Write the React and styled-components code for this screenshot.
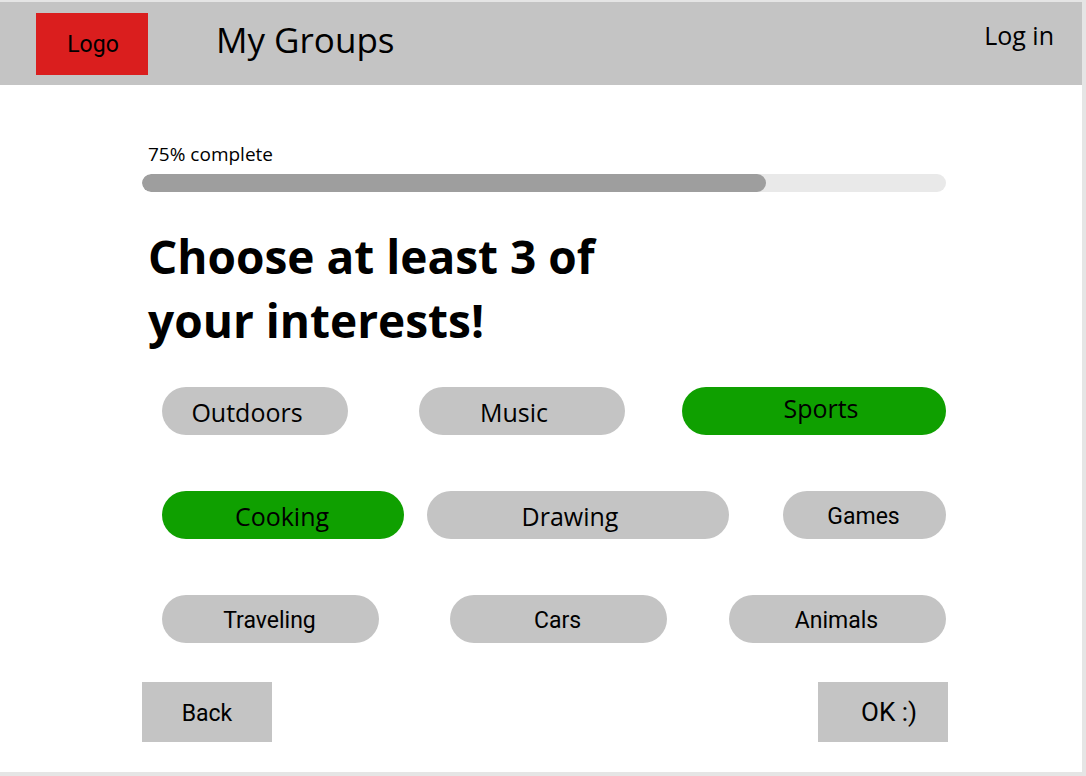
import React, { useState } from "react";
import styled, { createGlobalStyle, css } from "styled-components";

const GlobalStyle = createGlobalStyle`
  *, *::before, *::after { box-sizing: border-box; }
  body {
    margin: 0;
    background: #e5e5e5;
    color: #000;
    font-family: "Open Sans", "Noto Sans", sans-serif;
  }
`;

const Page = styled.div`
  display: flex;
  flex-direction: column;
  min-height: calc(100vh - 6px);
  margin: 2px 4px 4px 0;
  background: #fff;
`;

const Header = styled.header`
  display: flex;
  align-items: flex-start;
  padding: 11px 28px 10px 36px;
  background: #c4c4c4;
`;

const Logo = styled.a`
  display: flex;
  align-items: center;
  justify-content: center;
  width: 112px;
  height: 62px;
  padding-left: 2px;
  background: #da1e1e;
  color: #000;
  font-family: Roboto, sans-serif;
  font-size: 23px;
  text-decoration: none;
`;

const SiteTitle = styled.div`
  flex: 1;
  margin-left: 68px;
  font-size: 35px;
  line-height: 54px;
`;

const LoginLink = styled.a`
  color: #000;
  font-size: 25px;
  line-height: 44px;
  text-decoration: none;
`;

const Main = styled.main`
  padding: 57px 136px 0 142px;
`;

const ProgressLabel = styled.label`
  display: block;
  padding-left: 6px;
  font-size: 19px;
  line-height: 24px;
`;

const Progress = styled.progress`
  display: block;
  appearance: none;
  width: 100%;
  height: 18px;
  margin-top: 8px;
  border: 0;
  border-radius: 9px;
  background: #e9e9e9;
  overflow: hidden;

  &::-webkit-progress-bar {
    background: #e9e9e9;
  }
  &::-webkit-progress-value {
    border-radius: 9px;
    background: #9e9e9e;
  }
`;

const Heading = styled.h1`
  max-width: 520px;
  margin: 32px 0 0;
  padding-left: 6px;
  font-size: 46px;
  font-weight: 700;
  line-height: 64px;
`;

const Interests = styled.div`
  display: grid;
  gap: 56px;
  margin-top: 35px;
  padding-left: 20px;
`;

const InterestRow = styled.div`
  display: grid;
  grid-template-columns: ${(p) => p.$columns};

  & > :nth-child(2) { grid-column: 3; }
  & > :nth-child(3) { grid-column: 5; }
`;

const typefaces = {
  open: css`
    font-family: "Open Sans", sans-serif;
    font-size: 25px;
  `,
  roboto: css`
    font-family: Roboto, sans-serif;
    font-size: 23px;
  `,
};

const labelPadding = {
  center: "2px 2px 0 0",
  left: "2px 16px 0 0",
  right: "0 0 6px 14px",
};

const Chip = styled.button`
  height: 48px;
  padding: ${(p) => labelPadding[p.$label || "center"]};
  border: 0;
  border-radius: 24px;
  background: ${(p) => (p["aria-pressed"] ? "#0fa000" : "#c4c4c4")};
  color: #000;
  cursor: pointer;
  ${(p) => typefaces[p.$face]}
`;

const Actions = styled.div`
  display: flex;
  justify-content: space-between;
  margin-top: 39px;
  padding: 0 134px 30px 142px;
`;

const ActionButton = styled.button`
  width: 130px;
  height: 60px;
  padding: ${(p) => (p.$primary ? "0 0 0 12px" : "2px 0 0")};
  border: 0;
  background: #c4c4c4;
  color: #000;
  font-family: Roboto, sans-serif;
  font-size: ${(p) => (p.$primary ? "26px" : "23px")};
  cursor: pointer;
`;

const rows = [
  {
    columns: "186fr 71fr 206fr 57fr 264fr",
    items: [
      { name: "Outdoors", face: "open", label: "left" },
      { name: "Music", face: "open", label: "left" },
      { name: "Sports", face: "open", label: "right" },
    ],
  },
  {
    columns: "242fr 23fr 302fr 54fr 163fr",
    items: [
      { name: "Cooking", face: "open" },
      { name: "Drawing", face: "open", label: "left" },
      { name: "Games", face: "roboto" },
    ],
  },
  {
    columns: "217fr 71fr 217fr 62fr 217fr",
    items: [
      { name: "Traveling", face: "roboto" },
      { name: "Cars", face: "roboto" },
      { name: "Animals", face: "roboto" },
    ],
  },
];

export default function App() {
  const [selected, setSelected] = useState(["Sports", "Cooking"]);

  const toggle = (name) =>
    setSelected((current) =>
      current.includes(name)
        ? current.filter((n) => n !== name)
        : [...current, name]
    );

  return (
    <>
      <GlobalStyle />
      <Page>
        <Header>
          <Logo href="#">Logo</Logo>
          <SiteTitle>My Groups</SiteTitle>
          <LoginLink href="#login">Log in</LoginLink>
        </Header>
        <Main>
          <ProgressLabel htmlFor="progress">75% complete</ProgressLabel>
          <Progress id="progress" value={776} max={1000} />
          <Heading>Choose at least 3 of your interests!</Heading>
          <Interests>
            {rows.map((row) => (
              <InterestRow key={row.columns} $columns={row.columns}>
                {row.items.map((item) => (
                  <Chip
                    key={item.name}
                    type="button"
                    aria-pressed={selected.includes(item.name)}
                    $face={item.face}
                    $label={item.label}
                    onClick={() => toggle(item.name)}
                  >
                    {item.name}
                  </Chip>
                ))}
              </InterestRow>
            ))}
          </Interests>
        </Main>
        <Actions>
          <ActionButton type="button">Back</ActionButton>
          <ActionButton type="button" $primary>
            OK :)
          </ActionButton>
        </Actions>
      </Page>
    </>
  );
}
